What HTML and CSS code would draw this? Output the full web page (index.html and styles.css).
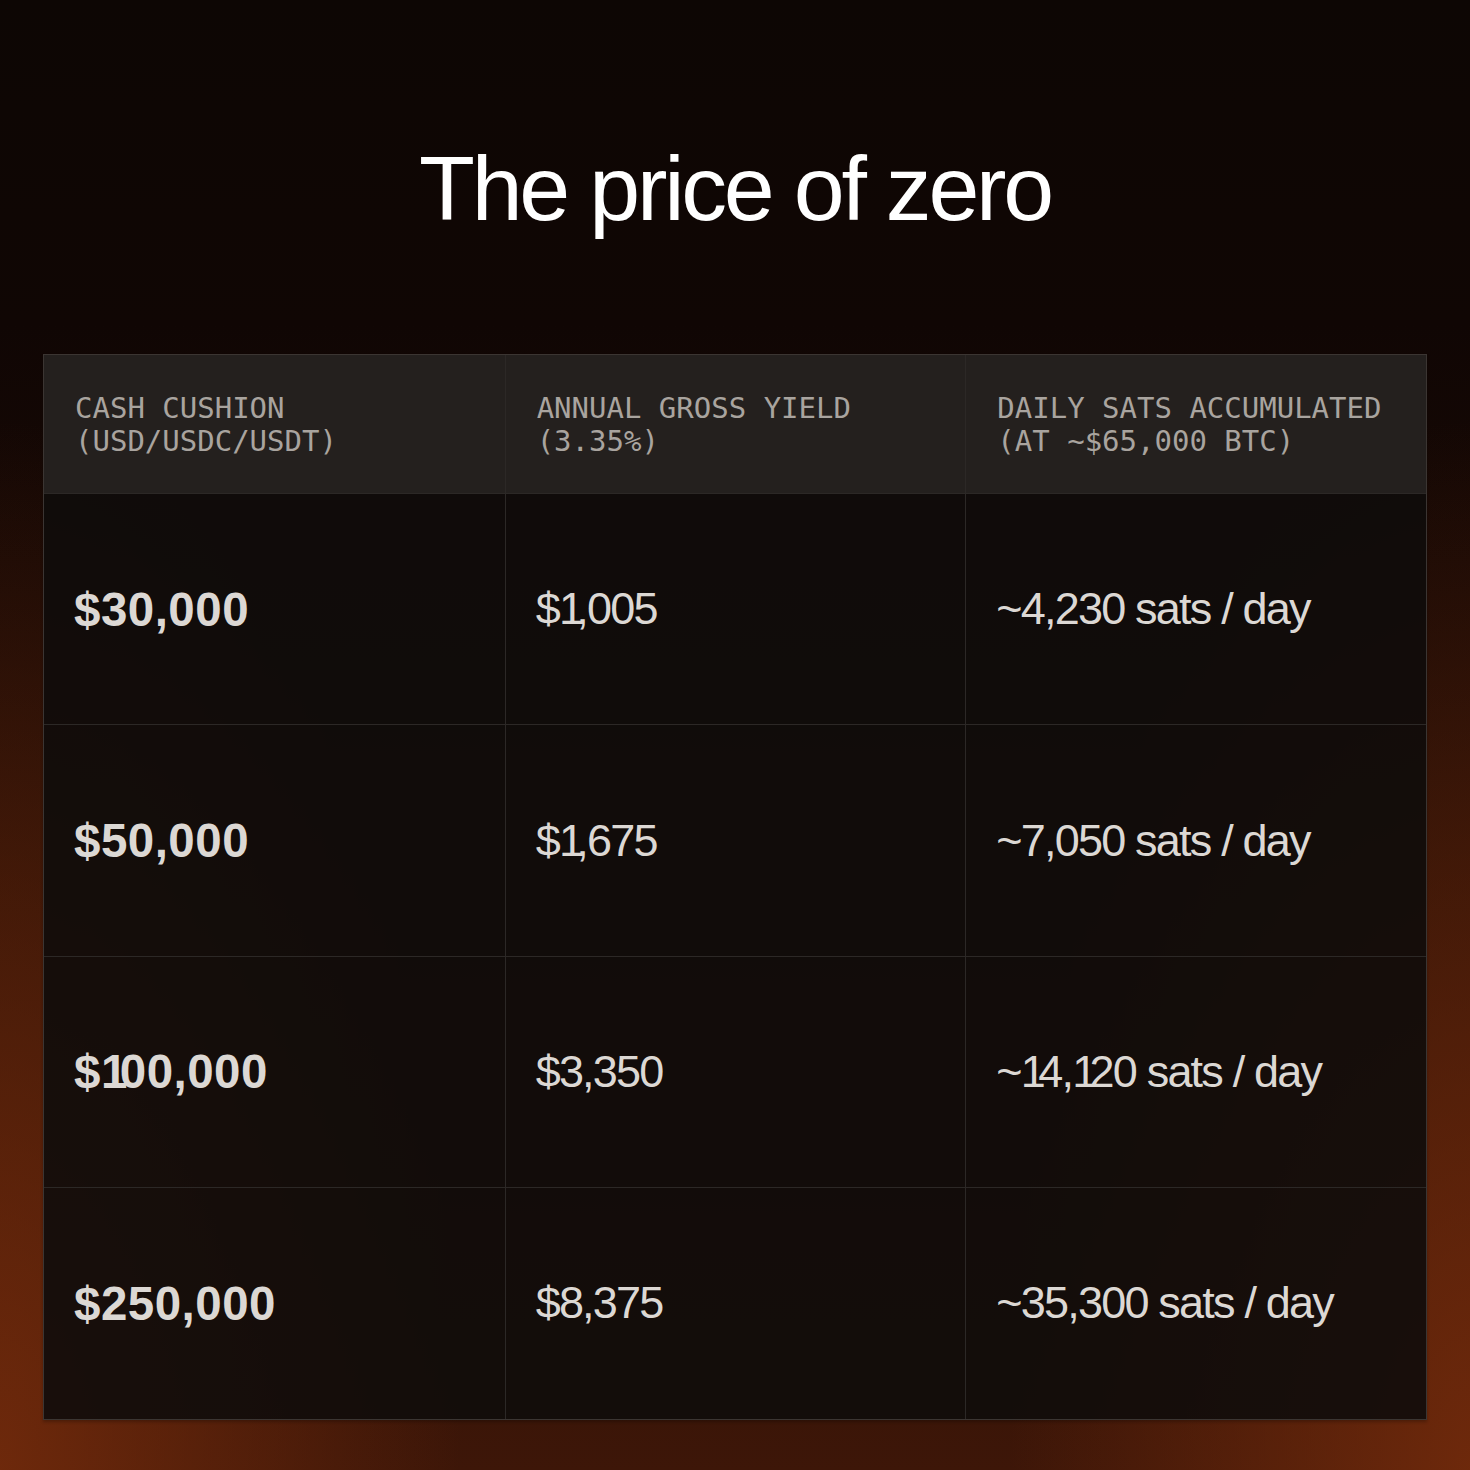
FILE: index.html
```html
<!DOCTYPE html>
<html lang="en">
<head>
<meta charset="utf-8">
<title>The price of zero</title>
<link rel="stylesheet" href="styles.css">
</head>
<body>
<main class="page">
  <header class="hero">
    <h1 class="title">The price of zero</h1>
  </header>
  <section class="table">
    <div class="row head">
      <div class="cell">CASH CUSHION<br>(USD/USDC/USDT)</div>
      <div class="cell">ANNUAL GROSS YIELD<br>(3.35%)</div>
      <div class="cell">DAILY SATS ACCUMULATED<br>(AT ~$65,000 BTC)</div>
    </div>
    <div class="row">
      <div class="cell strong">$30,000</div>
      <div class="cell">$<span class="n1">1</span>,005</div>
      <div class="cell">~4,230 sats / day</div>
    </div>
    <div class="row">
      <div class="cell strong">$50,000</div>
      <div class="cell">$<span class="n1">1</span>,675</div>
      <div class="cell">~7,050 sats / day</div>
    </div>
    <div class="row">
      <div class="cell strong">$<span class="n1">1</span>00,000</div>
      <div class="cell">$3,350</div>
      <div class="cell">~<span class="n1">1</span>4,<span class="n1">1</span>20 sats / day</div>
    </div>
    <div class="row">
      <div class="cell strong">$250,000</div>
      <div class="cell">$8,375</div>
      <div class="cell">~35,300 sats / day</div>
    </div>
  </section>
</main>
</body>
</html>
```

FILE: styles.css
```css
html, body {
  margin: 0;
  padding: 0;
}
body {
  width: 1470px;
  height: 1470px;
  overflow: hidden;
  background-color: #0d0604;
  background-image:
    radial-gradient(ellipse 460px 1050px at 0% 100%, rgba(118, 44, 12, 0.85), rgba(118, 44, 12, 0) 100%),
    radial-gradient(ellipse 460px 1050px at 100% 100%, rgba(118, 44, 12, 0.85), rgba(118, 44, 12, 0) 100%),
    linear-gradient(180deg, #0d0604 0%, #100604 22%, #1a0a05 45%, #2a1006 70%, #3d1608 100%);
  font-family: "Liberation Sans", Arial, sans-serif;
}
.page {
  padding: 0 43px;
}
.hero {
  height: 354px;
  display: flex;
  justify-content: center;
  padding-top: 128px;
  box-sizing: border-box;
}
.title {
  margin: 0;
  font-family: "Liberation Sans", Arial, sans-serif;
  font-weight: 400;
  font-size: 91.5px;
  line-height: 120px;
  letter-spacing: -0.035em;
  color: #ffffff;
  height: 120px;
}
.table {
  border: 1px solid #3b3532;
  display: flex;
  flex-direction: column;
  box-shadow: 0 2px 3px rgba(0, 0, 0, 0.25);
}
.row {
  display: grid;
  grid-template-columns: 1fr 1fr 1fr;
  height: 230.4px;
  border-top: 1px solid #2c2826;
  background: rgba(15, 12, 11, 0.9);
}
.row.head {
  height: 138px;
  border-top: none;
  background: rgba(37, 34, 32, 0.94);
}
.cell {
  display: flex;
  align-items: center;
  padding-left: 30px;
  border-left: 1px solid #2c2826;
  font-size: 45px;
  letter-spacing: -0.04em;
  color: #dcd8d4;
  white-space: nowrap;
}
.cell:first-child {
  border-left: none;
}
.cell.strong {
  font-weight: 700;
  font-size: 47.5px;
  letter-spacing: 0.01em;
}
.n1 {
  letter-spacing: -0.17em;
}
.cell.strong .n1 {
  letter-spacing: -0.16em;
}
.head .cell {
  font-family: "DejaVu Sans Mono", "Liberation Mono", monospace;
  font-size: 29px;
  line-height: 33px;
  letter-spacing: 0;
  color: #a9a49f;
  font-weight: 400;
  display: block;
  padding-left: 31px;
  padding-top: 37px;
  box-sizing: border-box;
}
```
